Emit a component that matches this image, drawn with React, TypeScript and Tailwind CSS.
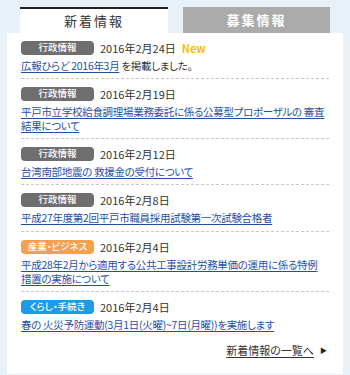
import React from "react";

type Item = {
  cat: string;
  tone: "gray" | "orange" | "blue";
  date: string;
  isNew?: boolean;
  link: React.ReactNode;
  rest?: string;
};

const items: Item[] = [
  { cat: "行政情報", tone: "gray", date: "2016年2月24日", isNew: true, link: "広報ひらど 2016年3月", rest: " を掲載しました。" },
  { cat: "行政情報", tone: "gray", date: "2016年2月19日", link: "平戸市立学校給食調理場業務委託に係る公募型プロポーザルの 審査結果について" },
  { cat: "行政情報", tone: "gray", date: "2016年2月12日", link: "台湾南部地震の 救援金の受付について" },
  { cat: "行政情報", tone: "gray", date: "2016年2月8日", link: "平成27年度第2回平戸市職員採用試験第一次試験合格者" },
  {
    cat: "産業・ビジネス",
    tone: "orange",
    date: "2016年2月4日",
    link: (
      <>
        平成28年2月から適用する公共工事設計労務単価の運用に係る特例<span className="whitespace-nowrap">措置</span>の実施について
      </>
    ),
  },
  { cat: "くらし・手続き", tone: "blue", date: "2016年2月4日", link: "春の 火災予防運動(3月1日(火曜)~7日(月曜))を実施します" },
];

const toneClass = {
  gray: "bg-[#6e6e6e]",
  orange: "bg-[#f5a04c]",
  blue: "bg-[#1c9be6]",
};

export default function App() {
  return (
    <div className="h-[375px] w-[350px] bg-[#e9f1f8] font-['Noto_Sans_CJK_JP',sans-serif] text-[#333] [font-feature-settings:'palt']">
      <div className="flex gap-[15px] pl-[20px] pt-[7px]">
        <div className="flex h-[26px] w-[148px] items-center justify-center border-t-2 border-[#222] bg-white text-[13px] tracking-[2px] text-[#333]">
          新着情報
        </div>
        <div className="flex h-[26px] w-[147px] items-center justify-center bg-[#ababab] text-[13px] font-bold tracking-[2px] text-white">
          募集情報
        </div>
      </div>

      <div className="mx-[7px] bg-white px-[14px] pb-[17px]">
        {items.map((it, i) => (
          <div
            key={i}
            className={`pt-[8px] ${i === 3 ? "pb-[6px]" : "pb-[5px]"} ${i < items.length - 1 ? "border-b border-dashed border-[#c8c8c8]" : ""}`}
          >
            <div className="flex h-[14px] items-center gap-[6px]">
              <span
                className={`flex h-[14px] w-[73px] items-center justify-center rounded-[4px] text-[9.5px] font-medium leading-none text-white ${toneClass[it.tone]}`}
              >
                {it.cat}
              </span>
              <span className="text-[11px] leading-none">{it.date}</span>
              {it.isNew && <span className="text-[11px] font-bold leading-none text-[#f2c200]">New</span>}
            </div>
            <p className="mt-[4px] text-[10.5px] leading-[14px] tracking-[-0.3px]">
              <a href="#" className="text-[#1f4fa6] underline underline-offset-2">
                {it.link}
              </a>
              {it.rest}
            </p>
          </div>
        ))}

        <div className="mt-[6px] flex items-center justify-end gap-[6px] pr-[2px] text-[11px] leading-[14px]">
          <a href="#" className="text-[#333] underline underline-offset-2">
            新着情報の一覧へ
          </a>
          <span className="text-[7px] text-[#222]">▶</span>
        </div>
      </div>
    </div>
  );
}
